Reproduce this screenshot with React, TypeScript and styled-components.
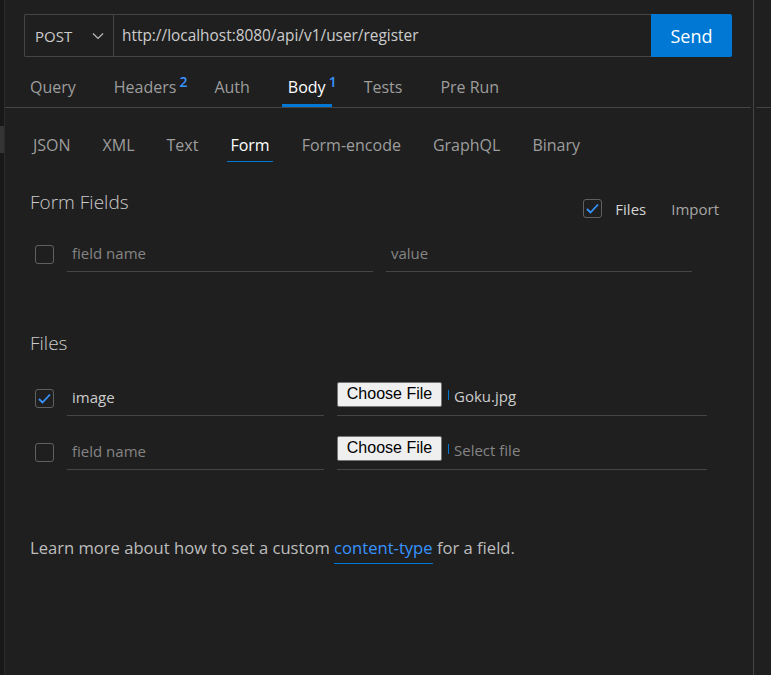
import React from "react";
import styled, { createGlobalStyle } from "styled-components";

const Global = createGlobalStyle`
  html, body { margin: 0; padding: 0; background: #1f1f1f; }
  body { font-family: "Open Sans", "Noto Sans", sans-serif; }
  * { box-sizing: border-box; }
`;

const Shell = styled.div`
  display: flex;
  width: 771px;
  height: 675px;
  background: #1f1f1f;
  overflow: hidden;
`;

const Gutter = styled.div`
  width: 5px;
  flex-shrink: 0;
  background: #181818;
  border-right: 1px solid #2b2b2b;
  display: flex;
  flex-direction: column;
`;

const GutterThumb = styled.div`
  margin-top: 126px;
  height: 27px;
  width: 4px;
  background: #343434;
`;

const Main = styled.div`
  flex: 1;
  min-width: 0;
  margin-right: 2px;
  display: flex;
  flex-direction: column;
`;

const Divider = styled.div`
  width: 1px;
  flex-shrink: 0;
  background: #454545;
`;

const SidePane = styled.div`
  width: 17px;
  flex-shrink: 0;
  padding-left: 2px;
`;

const SideHead = styled.div`
  height: 108px;
  border-bottom: 1px solid #454545;
`;

const UrlBar = styled.div`
  display: flex;
  height: 43px;
  margin: 14px 19px 0;
`;

const UrlField = styled.div`
  flex: 1;
  display: flex;
  align-items: center;
  border: 1px solid #454545;
  border-right: none;
  border-radius: 2px 0 0 2px;
`;

const Method = styled.div`
  width: 89px;
  height: 100%;
  display: flex;
  align-items: center;
  padding-left: 10px;
  gap: 20px;
  border-right: 1px solid #454545;
  color: #cccccc;
  font-size: 15px;
`;

const Url = styled.div`
  padding-left: 8px;
  color: #cccccc;
  font-size: 15.4px;
  white-space: nowrap;
`;

const SendButton = styled.button`
  width: 81px;
  height: 100%;
  border: none;
  border-radius: 0 2px 2px 0;
  background: #0078d4;
  color: #ffffff;
  font-family: inherit;
  font-size: 18px;
  padding: 0;
`;

const TabsRow = styled.div`
  display: flex;
  gap: 26px;
  padding: 0 19px;
  margin-top: 6px;
  border-bottom: 1px solid #454545;
`;

const Tab = styled.div<{ $active?: boolean }>`
  position: relative;
  padding: 14px 6px 7px;
  font-size: 16px;
  line-height: 20px;
  color: ${(p) => (p.$active ? "#ffffff" : "#9d9d9d")};
  border-bottom: 3px solid ${(p) => (p.$active ? "#0078d4" : "transparent")};
`;

const Badge = styled.span`
  position: absolute;
  top: 12px;
  left: calc(100% - 3px);
  font-size: 14px;
  font-weight: 600;
  line-height: 14px;
  color: #3794ff;
`;

const SubTabs = styled.div`
  display: flex;
  gap: 26px;
  padding-left: 25px;
  margin-top: 27px;
`;

const SubTab = styled.div<{ $active?: boolean }>`
  padding: 0 3px 6px;
  font-size: 16px;
  line-height: 20px;
  color: ${(p) => (p.$active ? "#ffffff" : "#9d9d9d")};
  border-bottom: 1px solid ${(p) => (p.$active ? "#0078d4" : "transparent")};
`;

const Content = styled.div`
  display: flex;
  flex-direction: column;
  padding: 0 32px 0 25px;
`;

const SectionHeader = styled.div<{ $top: number }>`
  display: flex;
  align-items: center;
  justify-content: space-between;
  margin-top: ${(p) => p.$top}px;
  height: 27px;
`;

const Heading = styled.div`
  font-size: 19px;
  font-weight: 300;
  line-height: 27px;
  color: #cccccc;
`;

const HeaderTools = styled.div`
  display: flex;
  align-items: center;
  margin-top: 12px;
`;

const ToolLabel = styled.span<{ $strong?: boolean }>`
  font-size: 15px;
  color: ${(p) => (p.$strong ? "#d4d4d4" : "#a6a6a6")};
  margin-left: ${(p) => (p.$strong ? "13px" : "25px")};
`;

const Row = styled.div<{ $top: number }>`
  display: flex;
  align-items: center;
  gap: 13px;
  height: 36px;
  padding-left: 5px;
  margin-top: ${(p) => p.$top}px;
`;

const Box = styled.div`
  width: 19px;
  height: 19px;
  flex-shrink: 0;
  border: 1px solid #606060;
  border-radius: 3px;
  display: flex;
  align-items: center;
  justify-content: center;
`;

const TextInput = styled.input<{ $w: number }>`
  width: ${(p) => p.$w}px;
  height: 36px;
  padding: 0 5px 2px;
  background: transparent;
  border: none;
  border-bottom: 1px solid #454545;
  outline: none;
  font-family: "Open Sans", "Noto Sans", sans-serif;
  font-size: 15px;
  color: #cccccc;
  &::placeholder {
    color: #858585;
  }
`;

const FileCell = styled.div`
  width: 370px;
  height: 36px;
  display: flex;
  align-items: center;
  border-bottom: 1px solid #454545;
`;

const ChooseButton = styled.button`
  width: 105px;
  height: 25px;
  padding: 0;
  margin-top: -7px;
  background: #efefef;
  border: 1px solid #767676;
  border-radius: 2px;
  color: #000000;
  font-family: "Liberation Sans", Arial, sans-serif;
  font-size: 16px;
`;

const Caret = styled.span`
  width: 1px;
  height: 10px;
  margin: -6px 5px 0 6px;
  background: #0078d4;
`;

const FileName = styled.span<{ $empty?: boolean }>`
  margin-top: -3px;
  font-size: 15px;
  color: ${(p) => (p.$empty ? "#858585" : "#cccccc")};
`;

const Footer = styled.p`
  margin: 66px 0 0;
  font-size: 16.6px;
  line-height: 24px;
  color: #bdbdbd;
`;

const Link = styled.a`
  color: #3794ff;
  text-decoration: none;
  padding-bottom: 4px;
  border-bottom: 1px solid #0078d4;
`;

function Check({ checked }: { checked?: boolean }) {
  return (
    <Box>
      {checked && (
        <svg width="15" height="15" viewBox="0 0 15 15">
          <polyline
            points="2,8 5.5,11.5 13,3.5"
            fill="none"
            stroke="#3794ff"
            strokeWidth="1.8"
          />
        </svg>
      )}
    </Box>
  );
}

function Chevron() {
  return (
    <svg width="12" height="8" viewBox="0 0 12 8">
      <polyline points="1,1.5 6,6.5 11,1.5" fill="none" stroke="#bbbbbb" strokeWidth="1.2" />
    </svg>
  );
}

const tabs: { label: string; badge?: string; active?: boolean }[] = [
  { label: "Query" },
  { label: "Headers", badge: "2" },
  { label: "Auth" },
  { label: "Body", badge: "1", active: true },
  { label: "Tests" },
  { label: "Pre Run" },
];

const bodyTabs = ["JSON", "XML", "Text", "Form", "Form-encode", "GraphQL", "Binary"];

export default function App() {
  return (
    <>
      <Global />
      <Shell>
        <Gutter>
          <GutterThumb />
        </Gutter>
        <Main>
          <UrlBar>
            <UrlField>
              <Method>
                POST
                <Chevron />
              </Method>
              <Url>http://localhost:8080/api/v1/user/register</Url>
            </UrlField>
            <SendButton>Send</SendButton>
          </UrlBar>
          <TabsRow>
            {tabs.map((t) => (
              <Tab key={t.label} $active={t.active}>
                {t.label}
                {t.badge && <Badge>{t.badge}</Badge>}
              </Tab>
            ))}
          </TabsRow>
          <SubTabs>
            {bodyTabs.map((t) => (
              <SubTab key={t} $active={t === "Form"}>
                {t}
              </SubTab>
            ))}
          </SubTabs>
          <Content>
            <SectionHeader $top={27}>
              <Heading>Form Fields</Heading>
              <HeaderTools>
                <Check checked />
                <ToolLabel $strong>Files</ToolLabel>
                <ToolLabel>Import</ToolLabel>
              </HeaderTools>
            </SectionHeader>
            <Row $top={20}>
              <Check />
              <TextInput $w={306} placeholder="field name" />
              <TextInput $w={306} placeholder="value" />
            </Row>
            <SectionHeader $top={58}>
              <Heading>Files</Heading>
            </SectionHeader>
            <Row $top={23}>
              <Check checked />
              <TextInput $w={257} defaultValue="image" />
              <FileCell>
                <ChooseButton>Choose File</ChooseButton>
                <Caret />
                <FileName>Goku.jpg</FileName>
              </FileCell>
            </Row>
            <Row $top={18}>
              <Check />
              <TextInput $w={257} placeholder="field name" />
              <FileCell>
                <ChooseButton>Choose File</ChooseButton>
                <Caret />
                <FileName $empty>Select file</FileName>
              </FileCell>
            </Row>
            <Footer>
              Learn more about how to set a custom <Link>content-type</Link> for a field.
            </Footer>
          </Content>
        </Main>
        <Divider />
        <SidePane>
          <SideHead />
        </SidePane>
      </Shell>
    </>
  );
}
